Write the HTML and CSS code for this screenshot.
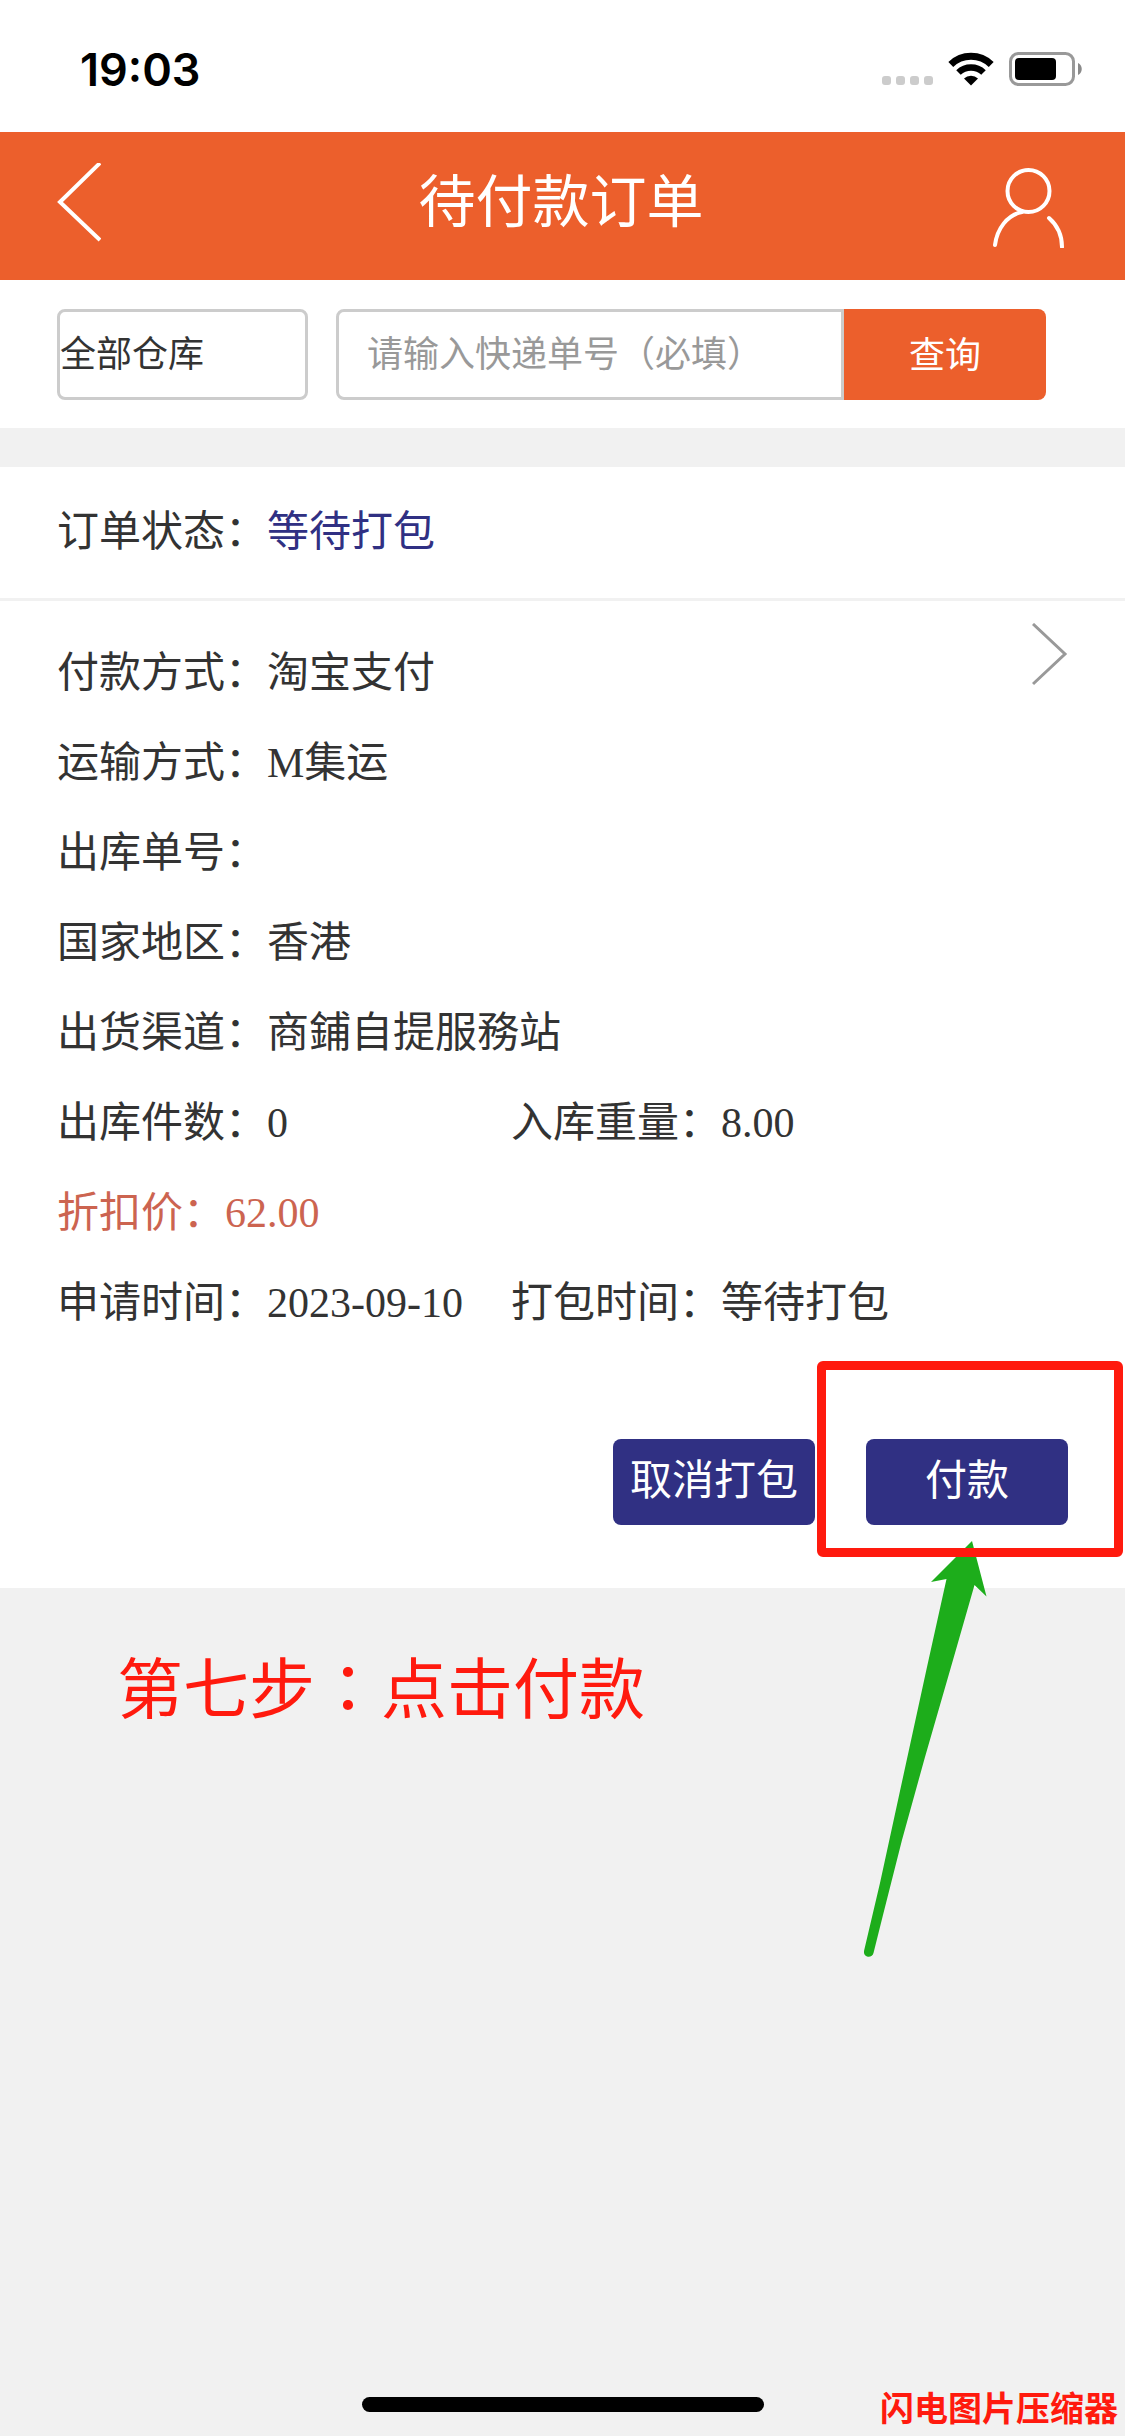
FILE: index.html
```html
<!DOCTYPE html>
<html lang="zh-CN">
<head>
<meta charset="utf-8">
<meta name="viewport" content="width=device-width, initial-scale=1">
<title>待付款订单</title>
<link rel="stylesheet" href="styles.css">
</head>
<body>
<div class="status-bar">
  <span class="clock">19:03</span>
  <div class="status-icons">
    <svg class="signal" width="52" height="34" viewBox="0 0 52 34" fill="#cccccc" aria-hidden="true">
      <rect x="1" y="24" width="9" height="9" rx="3"/>
      <rect x="15" y="24" width="9" height="9" rx="3"/>
      <rect x="29" y="24" width="9" height="9" rx="3"/>
      <rect x="43" y="24" width="9" height="9" rx="3"/>
    </svg>
    <svg class="wifi" width="46" height="34" viewBox="0 0 46 34" aria-hidden="true">
      <path d="M2.800 12.500A29 29 0 0 1 43.200 12.500" fill="none" stroke="#000" stroke-width="7"/>
      <path d="M10.500 20.500A18 18 0 0 1 35.500 20.500" fill="none" stroke="#000" stroke-width="6.500"/>
      <path d="M16 26.500A10 10 0 0 1 30 26.500L23 33.500Z" fill="#000"/>
    </svg>
    <svg class="battery" width="74" height="34" viewBox="0 0 74 34" aria-hidden="true">
      <rect x="1.500" y="1.500" width="63" height="31" rx="8" fill="none" stroke="#999" stroke-width="3"/>
      <rect x="6" y="6" width="41" height="22" rx="4" fill="#000"/>
      <path d="M69 11C74 13 74 21 69 23Z" fill="#8a8a8a"/>
    </svg>
  </div>
</div>

<header class="title-bar">
  <a class="bar-link" href="#back" aria-label="返回">
    <svg width="44" height="80" viewBox="0 0 44 80" fill="none" stroke="#fff" stroke-width="4"><path d="M43 0L3 39L43 77"/></svg>
  </a>
  <h1 class="title">待付款订单</h1>
  <a class="bar-link bar-link-end" href="#me" aria-label="个人中心">
    <svg width="72" height="90" viewBox="0 0 72 90" fill="none" stroke="#fff" stroke-width="4" stroke-linecap="round">
      <circle cx="35.500" cy="33" r="21"/>
      <path d="M29 54C14 57 4 71 2 87"/>
      <path d="M56 60C64 67 69 77 69 89"/>
    </svg>
  </a>
</header>

<form class="search">
  <select class="warehouse" aria-label="仓库">
    <option>全部仓库</option>
  </select>
  <div class="query">
    <input class="query-input" type="text" placeholder="请输入快递单号（必填）" aria-label="快递单号">
    <button class="query-button" type="button">查询</button>
  </div>
</form>

<main class="order">
  <p class="order-status">订单状态：<span class="state">等待打包</span></p>
  <div class="order-body">
    <ul class="details">
      <li>付款方式：淘宝支付</li>
      <li>运输方式：M集运</li>
      <li>出库单号：</li>
      <li>国家地区：香港</li>
      <li>出货渠道：商鋪自提服務站</li>
      <li class="pair"><span>出库件数：0</span><span>入库重量：8.00</span></li>
      <li class="price">折扣价：62.00</li>
      <li class="pair"><span>申请时间：2023-09-10</span><span>打包时间：等待打包</span></li>
    </ul>
    <a class="more" href="#detail" aria-label="订单详情">
      <svg width="36" height="64" viewBox="0 0 36 64" fill="none" stroke="#999" stroke-width="3"><path d="M1 1L33 31L1 61"/></svg>
    </a>
  </div>
  <div class="actions">
    <button class="action" type="button">取消打包</button>
    <div class="pay">
      <button class="action" type="button">付款</button>
      <svg class="arrow" width="124" height="418" viewBox="0 0 124 418" fill="#1dad1b" aria-hidden="true">
        <path d="M108 0L122.500 55.500L110.500 44L89 119L61 216L38 299L19 374L9.500 412A4.700 4.700 0 0 1 0 410L16 342L41 227L63 126L82.500 38L67 41Z"/>
      </svg>
      <div class="frame"></div>
    </div>
  </div>
</main>

<p class="step">第七步<span class="step-colon" lang="zh-TW">：</span>点击付款</p>

<footer class="bottom">
  <div class="home-indicator"></div>
  <span class="watermark">闪电图片压缩器</span>
</footer>
</body>
</html>
```
FILE: styles.css
```css
* {
  box-sizing: border-box;
}

body {
  display: flex;
  flex-direction: column;
  min-height: 100vh;
  margin: 0;
  background: #f1f1f1;
  color: #333;
  font-family: "Liberation Serif", "Noto Sans CJK SC", serif;
  font-size: 42px;
}

h1, p, ul {
  margin: 0;
  padding: 0;
  font-weight: 400;
}

button, input, select {
  margin: 0;
  border: 0;
  font: inherit;
  color: inherit;
}

svg {
  display: block;
}

.status-bar {
  display: flex;
  align-items: center;
  justify-content: space-between;
  height: 132px;
  padding: 6px 42px 0 80px;
  background: #fff;
}

.clock {
  color: #000;
  font-family: Inter, "Liberation Sans", sans-serif;
  font-size: 45px;
  font-weight: 600;
}

.status-icons {
  display: flex;
  gap: 15px;
}

.title-bar {
  display: grid;
  grid-template-columns: 1fr auto 1fr;
  align-items: center;
  height: 148px;
  padding: 0 60px 6px 57px;
  background: #ec5f2c;
}

.title {
  color: #fff;
  font-size: 57px;
  line-height: 80px;
}

.bar-link-end {
  justify-self: end;
}

.search {
  display: flex;
  gap: 28px;
  padding: 29px 79px 28px 57px;
  background: #fff;
  font-size: 36px;
}

.warehouse {
  width: 254px;
  height: 91px;
  padding: 0;
  border: 3px solid #ccc;
  border-radius: 8px;
  background: #fff;
  appearance: none;
}

.query {
  display: flex;
  flex: 1;
}

.query-input {
  flex: 1;
  min-width: 0;
  height: 91px;
  padding: 0 28px;
  border: 3px solid #ccc;
  border-radius: 8px 0 0 8px;
  background: #fff;
}

.query-input::placeholder {
  color: #999;
  opacity: 1;
}

.query-button {
  width: 202px;
  padding: 0 0 6px;
  border-radius: 0 8px 8px 0;
  background: #ec5f2c;
  color: #fff;
}

.order {
  margin-top: 39px;
  background: #fff;
}

.order-status {
  padding: 0 57px;
  border-bottom: 3px solid #f1f1f1;
  line-height: 131px;
}

.state {
  color: #303083;
}

.order-body {
  display: flex;
  padding: 22px 57px 0;
}

.details {
  flex: 1;
  padding-top: 5px;
  list-style: none;
  line-height: 90px;
}

.pair {
  display: grid;
  grid-template-columns: 454px 1fr;
}

.price {
  color: #cc6450;
}

.actions {
  display: flex;
  justify-content: flex-end;
  gap: 51px;
  padding: 91px 57px 63px;
}

.action {
  display: block;
  width: 202px;
  height: 86px;
  padding: 0 0 12px;
  border-radius: 8px;
  background: #303083;
  color: #fff;
}

.pay {
  position: relative;
}

.frame {
  position: absolute;
  inset: -78px -55px -32px -49px;
  border: 9px solid #ff1a0e;
  border-radius: 6px;
  pointer-events: none;
}

.arrow {
  position: absolute;
  top: 102px;
  left: -2px;
  pointer-events: none;
}

.step {
  padding: 54px 117px;
  color: #ff1a0e;
  font-size: 66px;
  line-height: 84px;
}

.step-colon {
  font-family: "Noto Sans CJK TC", sans-serif;
}

.bottom {
  display: grid;
  grid-template-columns: 1fr 402px 1fr;
  align-items: end;
  margin-top: auto;
  padding-bottom: 8px;
}

.home-indicator {
  grid-column: 2;
  height: 15px;
  margin-bottom: 16px;
  border-radius: 8px;
  background: #000;
}

.watermark {
  justify-self: end;
  padding-right: 7px;
  color: #ff1a0e;
  font-size: 34px;
  font-weight: 700;
  line-height: 36px;
}
```
